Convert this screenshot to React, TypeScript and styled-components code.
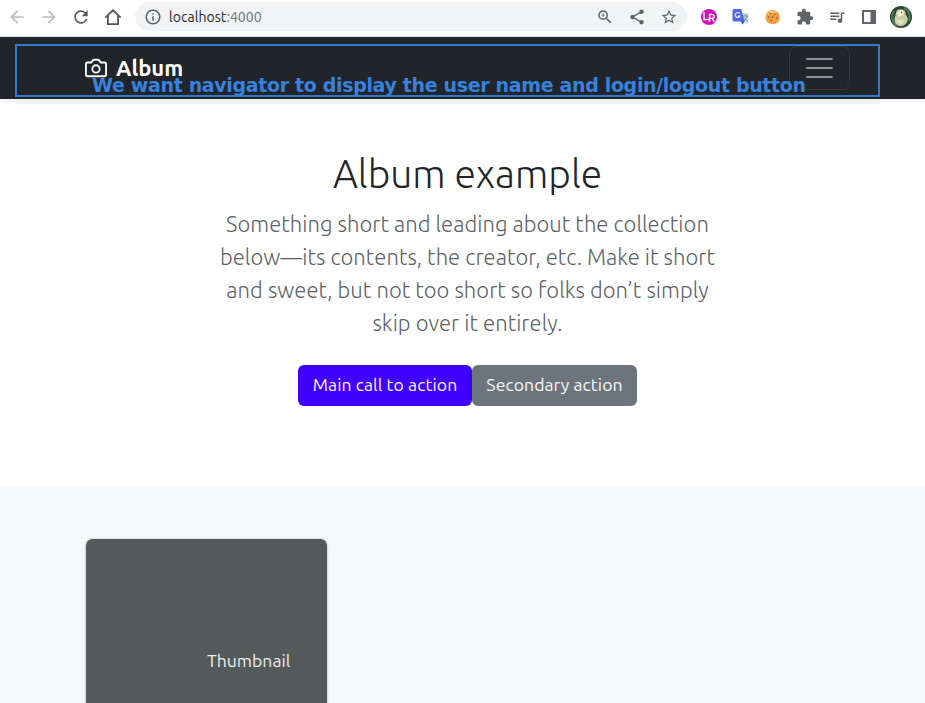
import React from "react";
import styled, { createGlobalStyle } from "styled-components";
import {
  MdArrowBack,
  MdArrowForward,
  MdRefresh,
  MdInfoOutline,
  MdZoomIn,
  MdShare,
  MdStarBorder,
  MdExtension,
  MdQueueMusic,
} from "react-icons/md";

const GlobalStyle = createGlobalStyle`
  * { box-sizing: border-box; }
  html, body { margin: 0; background: #fff; overflow: hidden; }
  body { font-family: Ubuntu, "Noto Sans", "Open Sans", sans-serif; color: #212529; }
  svg { display: block; flex: none; }
`;

const Window = styled.div`
  width: 100%;
  height: 703px;
  overflow: hidden;
  display: flex;
  flex-direction: column;
`;

const Toolbar = styled.header`
  height: 37px;
  flex: none;
  display: flex;
  align-items: center;
  padding: 0 13px 3px 7px;
  border-bottom: 1px solid #dcdfe1;
  color: #5f6368;
`;

const NavIcons = styled.div`
  display: flex;
  align-items: center;
  gap: 12px;
  width: 128px;
`;

const NavIcon = styled.span<{ $muted?: boolean }>`
  color: ${(p) => (p.$muted ? "#b9bbbe" : "#54585d")};
`;

const AddressBar = styled.div`
  width: 552px;
  height: 29px;
  border-radius: 15px;
  background: #f1f3f4;
  display: flex;
  align-items: center;
  padding: 0 9px;
`;

const Address = styled.span`
  flex: 1;
  margin-left: 7px;
  font-size: 14px;
  line-height: 20px;
  letter-spacing: 0.05px;
  color: #25282c;
`;

const Port = styled.span`
  color: #6d7175;
`;

const AddressActions = styled.div`
  display: flex;
  align-items: center;
  gap: 14px;
`;

const Extensions = styled.div`
  margin-left: auto;
  display: flex;
  align-items: center;
  gap: 14px;
`;

const AvatarSlot = styled.div`
  margin-left: -2px;
`;

const Navbar = styled.nav`
  position: relative;
  height: 62px;
  flex: none;
  display: flex;
  align-items: center;
  justify-content: space-between;
  padding: 0 75px 0 85px;
  background: #212529;
  box-shadow: 0 2px 5px rgba(0, 0, 0, 0.08);
`;

const Brand = styled.div`
  display: flex;
  align-items: center;
  gap: 9px;
  color: #fff;
  font-size: 22px;
  font-weight: 700;
  line-height: 31px;
`;

const BrandName = styled.span`
  padding-bottom: 2px;
`;

const Toggler = styled.div`
  width: 61px;
  height: 44px;
  border: 1px solid #373b3e;
  border-radius: 7px;
  display: flex;
  flex-direction: column;
  align-items: center;
  justify-content: center;
  gap: 7px;
`;

const TogglerBar = styled.span`
  width: 27px;
  height: 2px;
  border-radius: 1px;
  background: #909294;
`;

const Annotation = styled.div`
  position: absolute;
  left: 15px;
  top: 7px;
  width: 865px;
  height: 53px;
  border: 2px solid #3579ce;
  padding: 28px 0 0 75px;
  color: #3782df;
  font: 700 19px/22px "DejaVu Sans", sans-serif;
  letter-spacing: -0.34px;
  white-space: nowrap;
`;

const Hero = styled.section`
  height: 387px;
  flex: none;
  padding: 48px 0 0 10px;
  display: flex;
  flex-direction: column;
  align-items: center;
`;

const Title = styled.h1`
  margin: 0;
  font-size: 39px;
  font-weight: 300;
  line-height: 53px;
`;

const Lead = styled.p`
  margin: 7px 0 26px;
  width: 510px;
  text-align: center;
  color: #5c6368;
  font-size: 22px;
  font-weight: 300;
  line-height: 33px;
  letter-spacing: 0.04px;
`;

const Actions = styled.div`
  display: flex;
`;

const Button = styled.button<{ $primary?: boolean }>`
  width: ${(p) => (p.$primary ? 174 : 165)}px;
  height: 41px;
  padding: 0 0 2px;
  border: 0;
  border-radius: 6px;
  background: ${(p) => (p.$primary ? "#4000ff" : "#6c757d")};
  color: #f8f8fb;
  font-family: inherit;
  font-size: 17.6px;
  letter-spacing: 0.08px;
  white-space: nowrap;
`;

const AlbumSection = styled.section`
  flex: 1;
  padding: 52px 85px 0;
  background: #f8f9fb;
`;

const Card = styled.article`
  width: 243px;
  height: 250px;
  border: 1px solid #dcdfe0;
  border-radius: 7px;
  background: #54595b;
  background-clip: padding-box;
  box-shadow: 0 2px 4px rgba(0, 0, 0, 0.09);
  padding: 109px 0 0 121px;
  color: #eceeef;
  font-size: 17.6px;
  line-height: 26px;
`;

function HomeIcon() {
  return (
    <svg width="20" height="20" viewBox="0 0 20 20" fill="none" stroke="currentColor" strokeWidth="1.8">
      <path d="M2.300 10.700 10 3.300l7.700 7.400M4.900 9v8.100h10.200V9" />
    </svg>
  );
}

function CameraIcon() {
  return (
    <svg width="22" height="22" viewBox="0 0 24 24" fill="none" stroke="currentColor" strokeWidth="2" strokeLinecap="round" strokeLinejoin="round">
      <path d="M23 19a2 2 0 0 1-2 2H3a2 2 0 0 1-2-2V8a2 2 0 0 1 2-2h4l2-3h6l2 3h4a2 2 0 0 1 2 2z" />
      <circle cx="12" cy="13" r="4" />
    </svg>
  );
}

function RoundBadgeIcon() {
  return (
    <svg width="18" height="18" viewBox="0 0 18 18">
      <circle cx="9" cy="9" r="8" fill="#cd12b8" />
      <path d="M4 4v7.500h5M9.500 14V6.500h2.700a1.900 1.900 0 0 1 0 3.800H9.500m2.500 0 2.300 3.500" fill="none" stroke="#fbe6f8" strokeWidth="1.500" />
    </svg>
  );
}

function TranslateIcon() {
  return (
    <svg width="18" height="18" viewBox="0 0 18 18">
      <path d="M8 5h8.500V15.500H11z" fill="#d5dce4" />
      <path d="M11 8h5m-2.500-1.500V8m1.500 0c-.5 2.500-1.500 4-3 5m.3-3.500c1 2 2 3 3.700 3.500" fill="none" stroke="#6d8e9c" />
      <path d="M8.500 13h4l-2 3.500z" fill="#3446b5" />
      <path d="M2 1h7.200l3.500 12.500H2A1.500 1.500 0 0 1 .5 12V2.500A1.500 1.500 0 0 1 2 1z" fill="#4d69dc" />
      <path d="M7.700 5.500A2.500 2.500 0 1 0 8 8H5.700" fill="none" stroke="#e7ebff" strokeWidth="1.200" />
    </svg>
  );
}

function CookieIcon() {
  return (
    <svg width="18" height="18" viewBox="0 0 18 18">
      <path d="M8 2c1-.8 2 .3 3 .5 1.500 0 1.500 1.500 3 2 1.500.7 1 2 1.500 3.500C17 14 12 16.500 8 16 4 16 1 13 1.800 8.500 2 5 4 2.500 8 2z" fill="#f0a044" />
      <path d="M4 6c3-3 5-3 8-1" fill="none" stroke="#ffc978" strokeWidth="2.500" />
      <g fill="#8b4929">
        <circle cx="6" cy="5.500" r=".8" /><circle cx="11" cy="6" r=".8" />
        <circle cx="4.500" cy="9" r=".8" /><circle cx="8.500" cy="9" r=".8" />
        <circle cx="12.800" cy="10" r=".8" /><circle cx="7" cy="12.500" r=".8" />
      </g>
    </svg>
  );
}

function SidePanelIcon() {
  return (
    <svg width="18" height="18" viewBox="0 0 18 18" fill="currentColor" fillRule="evenodd">
      <path d="M2 2h14v14H2zM4 4v10h6.500V4z" />
    </svg>
  );
}

function Avatar() {
  return (
    <svg width="22" height="22" viewBox="0 0 22 22">
      <circle cx="11" cy="11" r="11" fill="#234a38" />
      <path d="M4 5C1 9 2 17 7 20M14 2c5 2 7 8 5 13" fill="none" stroke="#587554" strokeWidth="2" />
      <path d="M6 7c0-3 3-4.500 6-3.500 3 .5 4 3 3.500 5 3.500 3 2.500 8.500-1 10.500-4 2.500-9 1-10-4-.5-3 1-5 1.500-8z" fill="#c8cda2" />
      <path d="M8 6c2-3 5-2 6 0l-1 3-5 2z" fill="#eff0d2" />
      <path d="M6 12c2 3 5 3 8 1l-2 5c-3 1-5-1-6-6z" fill="#e2e4bd" />
      <circle cx="11.500" cy="6.500" r=".7" fill="#454935" />
    </svg>
  );
}

export default function App() {
  return (
    <>
      <GlobalStyle />
      <Window>
        <Toolbar>
          <NavIcons>
            <NavIcon $muted><MdArrowBack size={20} /></NavIcon>
            <NavIcon $muted><MdArrowForward size={20} /></NavIcon>
            <NavIcon><MdRefresh size={20} /></NavIcon>
            <NavIcon><HomeIcon /></NavIcon>
          </NavIcons>
          <AddressBar>
            <MdInfoOutline size={18} />
            <Address>localhost<Port>:4000</Port></Address>
            <AddressActions>
              <MdZoomIn size={18} />
              <MdShare size={18} />
              <MdStarBorder size={18} />
            </AddressActions>
          </AddressBar>
          <Extensions>
            <RoundBadgeIcon />
            <TranslateIcon />
            <CookieIcon />
            <MdExtension size={18} />
            <MdQueueMusic size={18} />
            <SidePanelIcon />
            <AvatarSlot><Avatar /></AvatarSlot>
          </Extensions>
        </Toolbar>
        <Navbar>
          <Brand><CameraIcon /><BrandName>Album</BrandName></Brand>
          <Toggler><TogglerBar /><TogglerBar /><TogglerBar /></Toggler>
          <Annotation>We want navigator to display the user name and login/logout button</Annotation>
        </Navbar>
        <Hero>
          <Title>Album example</Title>
          <Lead>
            Something short and leading about the collection below—its contents, the
            creator, etc. Make it short and sweet, but not too short so folks don’t
            simply skip over it entirely.
          </Lead>
          <Actions>
            <Button $primary>Main call to action</Button>
            <Button>Secondary action</Button>
          </Actions>
        </Hero>
        <AlbumSection>
          <Card>Thumbnail</Card>
        </AlbumSection>
      </Window>
    </>
  );
}
